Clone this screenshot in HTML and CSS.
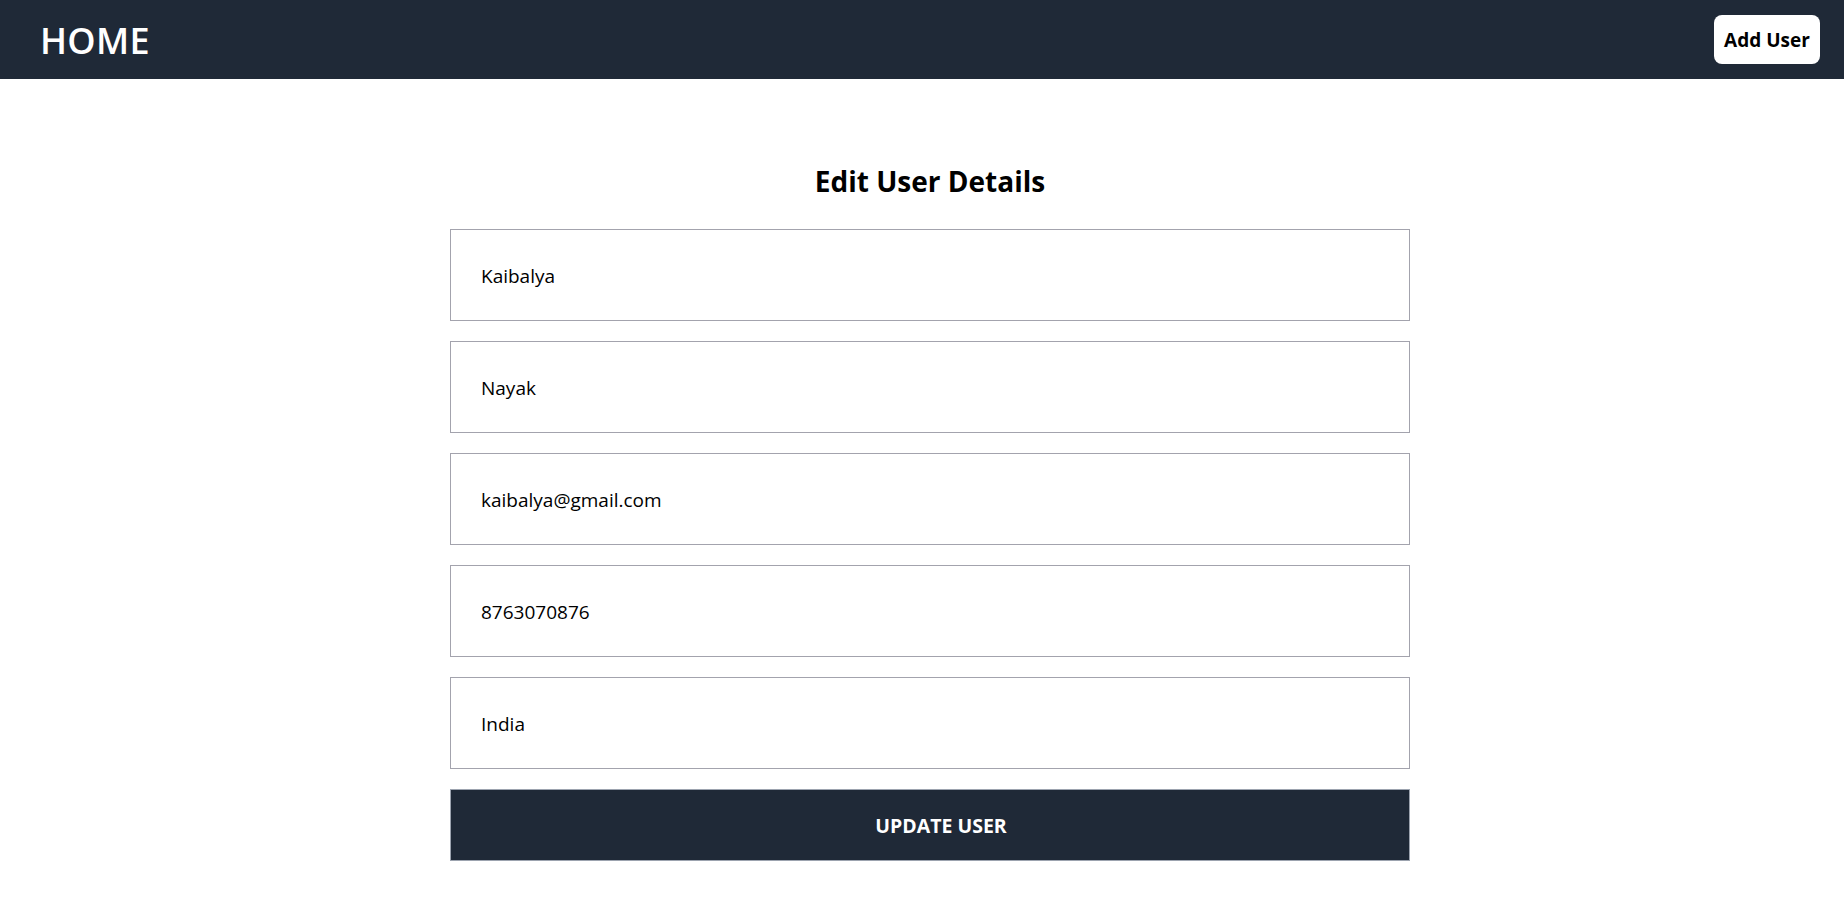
FILE: index.html
```html
<!DOCTYPE html>
<html lang="en">
<head>
<meta charset="utf-8">
<title>Edit User</title>
<link rel="stylesheet" href="styles.css">
</head>
<body>
<header class="topbar">
  <a class="brand" href="#">HOME</a>
  <button class="add-btn" type="button">Add User</button>
</header>
<main class="page">
  <form class="user-form">
    <h1 class="form-title">Edit User Details</h1>
    <input class="field" type="text" value="Kaibalya">
    <input class="field" type="text" value="Nayak">
    <input class="field" type="email" value="kaibalya@gmail.com">
    <input class="field" type="text" value="8763070876">
    <input class="field" type="text" value="India">
    <button class="submit-btn" type="button">UPDATE USER</button>
  </form>
</main>
</body>
</html>
```

FILE: styles.css
```css
* { box-sizing: border-box; }
html, body { margin: 0; padding: 0; background: #fff; }
body { font-family: "Open Sans", "Noto Sans", sans-serif; color: #000; }

.topbar {
  height: 79px;
  background: #1f2937;
  display: flex;
  align-items: center;
  justify-content: space-between;
  padding: 0 24px 0 40px;
}
.brand {
  color: #fff;
  text-decoration: none;
  font-size: 36px;
  font-weight: 600;
  letter-spacing: 0.3px;
  line-height: 1;
  margin-top: 2px;
}
.add-btn {
  height: 49px;
  width: 106px;
  background: #fff;
  color: #000;
  border: none;
  border-radius: 8px;
  font-family: inherit;
  font-size: 19px;
  font-weight: 700;
  padding: 0;
  margin-top: 0;
}

.page {
  padding-left: 16px;
  display: flex;
  justify-content: center;
}
.user-form {
  width: 960px;
  display: flex;
  flex-direction: column;
  gap: 20px;
  padding-top: 82px;
}
.form-title {
  margin: 0 0 8px;
  text-align: center;
  font-size: 28px;
  line-height: 40px;
  font-weight: 700;
}
.field {
  height: 92px;
  width: 100%;
  border: 1px solid #a3a3ad;
  border-radius: 0;
  padding: 1px 30px 0;
  font-family: inherit;
  font-size: 19px;
  color: #000;
  background: #fff;
  outline: none;
}
.submit-btn {
  height: 72px;
  width: 100%;
  background: #1f2937;
  color: #fff;
  border: 1px solid #9ca3af;
  font-family: inherit;
  font-size: 19.5px;
  font-weight: 700;
  padding: 0 0 0 22px;
}
```
